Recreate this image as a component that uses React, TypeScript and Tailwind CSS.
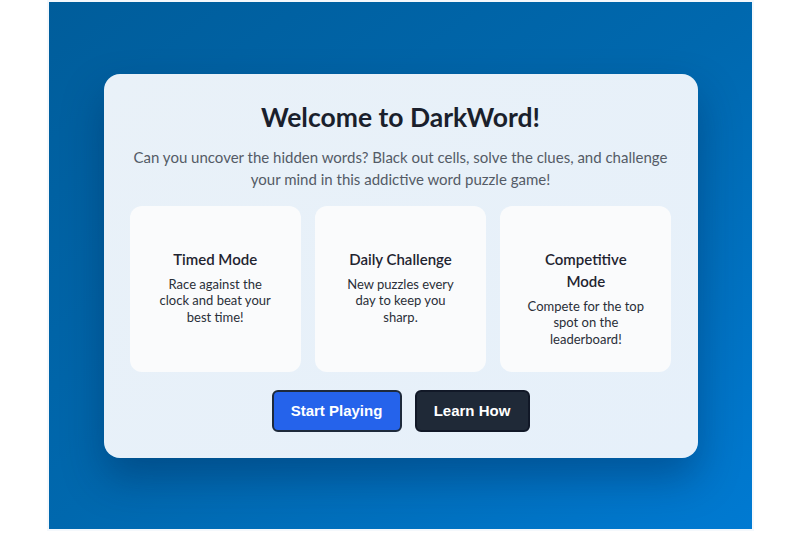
import React from "react";

const features = [
  { title: "Timed Mode", desc: "Race against the clock and beat your best time!" },
  { title: "Daily Challenge", desc: "New puzzles every day to keep you sharp." },
  { title: "Competitive Mode", desc: "Compete for the top spot on the leaderboard!" },
];

export default function App() {
  return (
    <div className="w-[806px] h-[537px] bg-white overflow-hidden">
      <div className="ml-[47px] w-[707px] h-[531px] border-2 border-[#f4f8fc] bg-gradient-to-br from-[#005d9b] via-[#0068ae] to-[#007ad2] flex items-center justify-center">
        <div
          className="w-[594px] rounded-2xl bg-gradient-to-br from-[#e9f1f8] to-[#e6f0fa] shadow-[0_20px_40px_rgba(0,30,70,0.35)] px-[26px] pt-[26px] pb-[26px] flex flex-col items-center"
          style={{ fontFamily: "Lato, 'Open Sans', sans-serif" }}
        >
          <h1 className="text-[26.5px] leading-[34px] font-bold text-[#1a1f2c]">Welcome to DarkWord!</h1>
          <p className="mt-[12px] text-[15px] leading-[22px] text-[#545b66] text-center px-1">
            Can you uncover the hidden words? Black out cells, solve the clues, and challenge your mind in this addictive word puzzle game!
          </p>
          <div className="mt-[16px] w-full grid grid-cols-3 gap-[14px]">
            {features.map((f) => (
              <div key={f.title} className="bg-[#fafbfc] rounded-xl px-6 pt-[42px] pb-[24px] flex flex-col items-center text-center h-[166px]">
                <h3 className="text-[15px] leading-[22px] font-semibold text-[#1f2430]">{f.title}</h3>
                <p className="mt-[6px] text-[13px] leading-[16.5px] text-[#2a2f38]">{f.desc}</p>
              </div>
            ))}
          </div>
          <div className="mt-[18px] flex gap-[13px]" style={{ fontFamily: "'Liberation Sans', Arial, sans-serif" }}>
            <button className="w-[130px] h-[42px] rounded-md bg-[#2563eb] border-2 border-[#1e2a3b] text-white font-bold text-[15px] pt-[1px]">
              Start Playing
            </button>
            <button className="w-[115px] h-[42px] rounded-md bg-[#1f2937] border-2 border-[#111827] text-white font-bold text-[15px] pt-[1px]">
              Learn How
            </button>
          </div>
        </div>
      </div>
    </div>
  );
}
